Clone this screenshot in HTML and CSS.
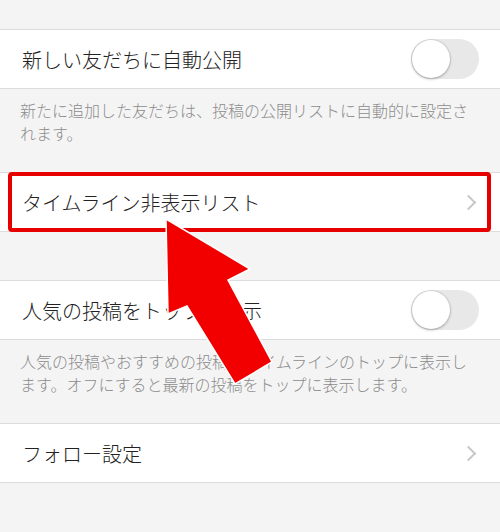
FILE: index.html
```html
<!DOCTYPE html>
<html lang="ja">
<head>
<meta charset="utf-8">
<link rel="stylesheet" href="styles.css">
</head>
<body>
<div class="settings">
	<div class="row">
		<span class="label">新しい友だちに自動公開</span>
		<span class="toggle"><span class="knob"></span></span>
	</div>
	<div class="note">新たに追加した友だちは、投稿の公開リストに自動的に設定されます。</div>

	<div class="row rowLink">
		<span class="label">タイムライン非表示リスト</span>
		<span class="chevron"></span>
	</div>

	<div class="row">
		<span class="label">人気の投稿をトップに表示</span>
		<span class="toggle"><span class="knob"></span></span>
	</div>
	<div class="note">人気の投稿やおすすめの投稿をタイムラインのトップに表示します。オフにすると最新の投稿をトップに表示します。</div>

	<div class="row">
		<span class="label">フォロー設定</span>
		<span class="chevron"></span>
	</div>
</div>

<div class="highlight"></div>
<svg class="arrow" width="500" height="532" viewBox="0 0 500 532">
	<polygon points="166,219 250,269 228,280 272,362 235,384 187,306 168,314"
		fill="#f20000" stroke="#ffffff" stroke-width="1.5" stroke-linejoin="miter"/>
</svg>
</body>
</html>
```

FILE: styles.css
```css
body {
	margin: 0;
	background-color: #f4f4f4;
	font-family: "Noto Sans CJK JP", "Noto Sans", sans-serif;
}

.settings {
	padding-top: 29px;
}

.row {
	display: flex;
	align-items: center;
	justify-content: space-between;
	height: 58px;
	padding: 0 21px 0 22px;
	background-color: #fff;
	border-top: 1px solid #dcdcdc;
	border-bottom: 1px solid #dcdcdc;
}

.rowLink {
	margin-bottom: 48px;
}

.label {
	font-size: 20px;
	font-weight: 300;
	color: #222;
}

.note {
	padding: 10px 20px 27px 20px;
	font-size: 16px;
	font-weight: 300;
	line-height: 23px;
	color: #8c8c8c;
}

.toggle {
	position: relative;
	width: 68px;
	height: 40px;
	border-radius: 20px;
	background-color: #e8e8e8;
}

.knob {
	position: absolute;
	left: 1px;
	top: 1px;
	width: 38px;
	height: 38px;
	border-radius: 50%;
	background-color: #fff;
	box-shadow: 0 1px 3px rgba(0, 0, 0, 0.28), 0 0 0 1px rgba(0, 0, 0, 0.06);
}

.chevron {
	width: 9px;
	height: 9px;
	margin-right: 5px;
	border-top: 2px solid #c8c8cb;
	border-right: 2px solid #c8c8cb;
	transform: rotate(45deg);
}

.highlight {
	position: absolute;
	left: 8px;
	top: 172px;
	width: 475px;
	height: 52px;
	border: 4px solid #e60000;
	border-radius: 4px;
}

.arrow {
	position: absolute;
	left: 0;
	top: 0;
}
```
